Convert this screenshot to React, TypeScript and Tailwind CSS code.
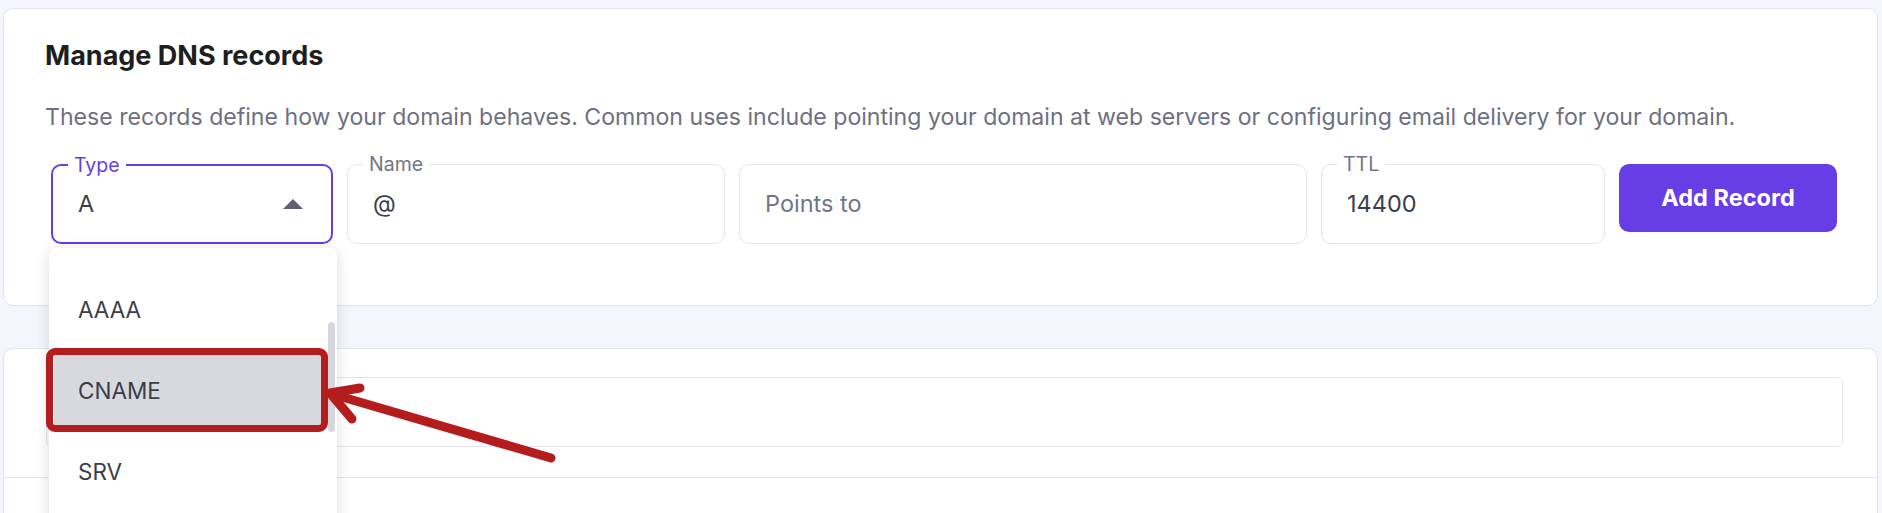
import React from "react";

const font = { fontFamily: "Inter, 'Noto Sans', sans-serif" };

function Field({
  label,
  value,
  placeholder,
  width,
  active,
  children,
}: {
  label?: string;
  value?: string;
  placeholder?: string;
  width: string;
  active?: boolean;
  children?: React.ReactNode;
}) {
  return (
    <div
      className={`relative h-[80px] shrink-0 rounded-[10px] bg-white ${width} ${
        active ? "border-2 border-[#673de6]" : "border border-[#e3e4ea]"
      }`}
    >
      {label && (
        <span
          className={`absolute left-[15px] top-[-12px] bg-white px-[6px] text-[19.5px] leading-[22px] ${
            active ? "text-[#673de6]" : "text-[#727586]"
          }`}
        >
          {label}
        </span>
      )}
      <div className="flex h-full items-center pl-[25px] pr-[28px] text-[23.5px]">
        {value ? (
          <span className="text-[#3b3d4a]">{value}</span>
        ) : (
          <span className="text-[#727586]">{placeholder}</span>
        )}
        {active && (
          <svg className="ml-auto" width="20" height="10" viewBox="0 0 20 10">
            <polygon points="10,0 20,10 0,10" fill="#5f6170" />
          </svg>
        )}
      </div>
      {children}
    </div>
  );
}

const types = ["AAAA", "CNAME", "SRV"];

export default function App() {
  return (
    <div
      className="relative h-[513px] w-full overflow-hidden bg-[#f4f5fd] pl-[3px] pr-[4px] pt-[8px]"
      style={font}
    >
      {/* Manage DNS card */}
      <div className="h-[298px] rounded-[10px] border border-[#e3e4ea] bg-white pl-[41px] pr-[34px] pt-[31px]">
        <h2 className="text-[27px] font-bold leading-[32px] text-[#1d1e20]">Manage DNS records</h2>
        <p className="mt-[30px] whitespace-nowrap text-[23.1px] leading-[30px] text-[#6d7081]">
          These records define how your domain behaves. Common uses include pointing your domain at web servers or
          configuring email delivery for your domain.
        </p>
        <div className="ml-[6px] mt-[32px] flex items-start gap-[14px]">
          <Field label="Type" value="A" width="w-[282px]" active>
            {/* open menu, scrolled a bit */}
            <div className="absolute left-[-4px] top-[82px] z-10 h-[300px] w-[288px] overflow-hidden rounded-[8px] bg-white shadow-[0_2px_14px_rgba(0,0,0,0.14)]">
              <div className="flex flex-col gap-[10px] pl-[5px] pr-[16px] pt-[26px]">
                {types.map((t) => (
                  <div
                    key={t}
                    className={`flex h-[71px] items-center pl-[24px] text-[22.5px] text-[#3b3d4a] ${
                      t === "CNAME" ? "bg-[#d8d9de]" : ""
                    }`}
                  >
                    {t}
                  </div>
                ))}
              </div>
              <div className="absolute right-[2px] top-[74px] h-[110px] w-[7px] rounded-full bg-[#d6d7dc]" />
            </div>
          </Field>
          <Field label="Name" value="@" width="w-[378px]" />
          <Field placeholder="Points to" width="w-[568px]" />
          <Field label="TTL" value="14400" width="w-[284px]" />
          <button className="h-[68px] w-[218px] shrink-0 rounded-[10px] bg-[#673de6] text-[23.5px] font-bold text-white">
            Add Record
          </button>
        </div>
      </div>

      {/* records card */}
      <div className="mt-[42px] h-[200px] rounded-t-[10px] border border-[#e3e4ea] bg-white pt-[28px]">
        <div className="ml-[42px] mr-[34px] h-[70px] rounded-[6px] border border-[#e3e4ea]" />
        <div className="mt-[30px] border-t border-[#e3e4ea]" />
      </div>

      {/* annotation */}
      <div className="absolute left-[46px] top-[348px] z-20 h-[84px] w-[282px] rounded-[9px] border-[7px] border-[#b51c1e]" />
      <svg className="absolute left-0 top-0 z-20" width="600" height="513" viewBox="0 0 600 513">
        <g stroke="#b51c1e" strokeWidth="9" strokeLinecap="round" strokeLinejoin="round" fill="none">
          <line x1="551" y1="458" x2="332" y2="394" />
          <polyline points="360,388 330,393 352,419" />
        </g>
      </svg>
    </div>
  );
}
